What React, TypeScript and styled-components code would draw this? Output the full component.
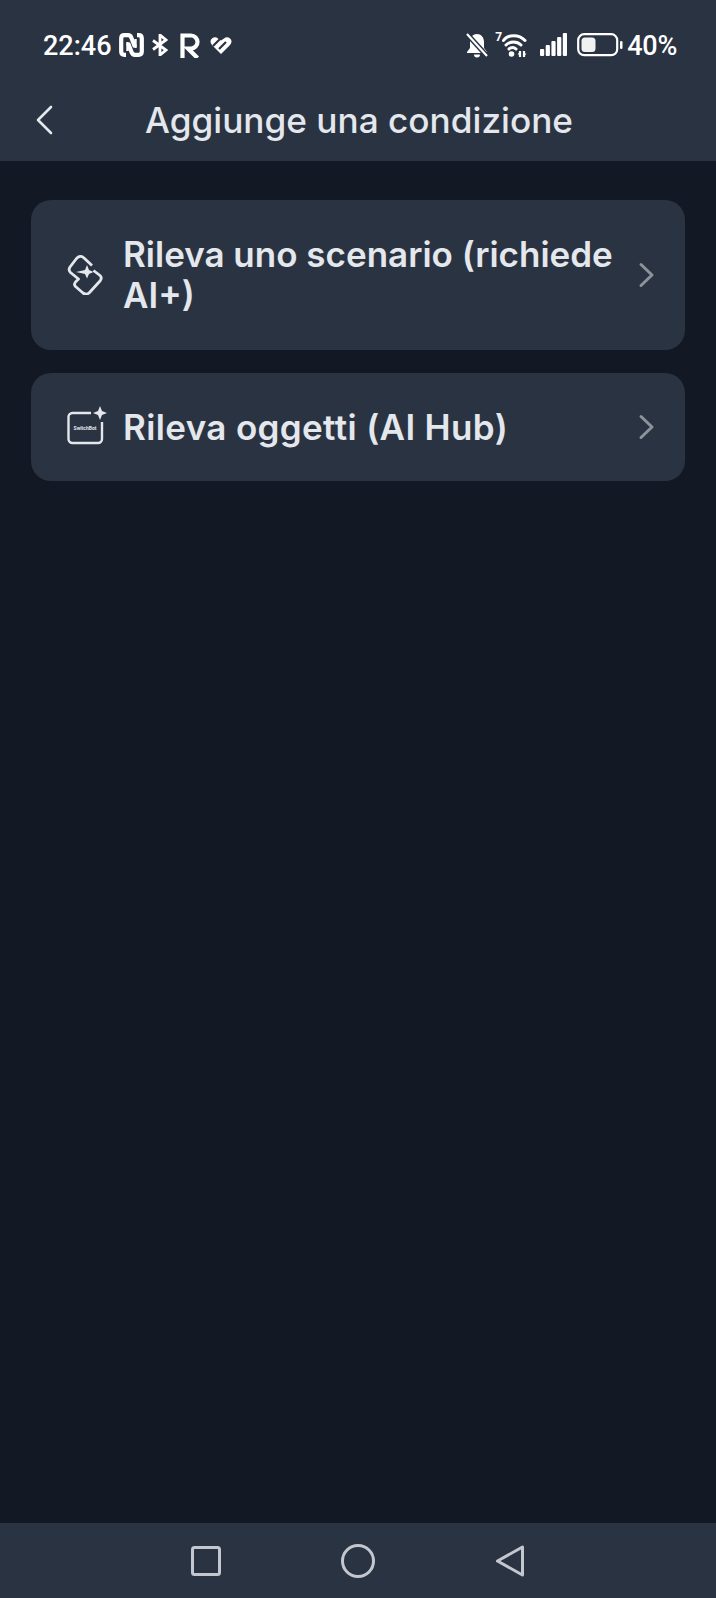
import { createGlobalStyle } from "styled-components";
import styled from "styled-components";

const GlobalStyle = createGlobalStyle`
  html, body {
    margin: 0;
    padding: 0;
    background: #121924;
  }
`;

const Page = styled.div`
  width: 716px;
  height: 1598px;
  display: flex;
  flex-direction: column;
  background: #121924;
  font-family: Inter, "Noto Sans", sans-serif;
`;

const TopArea = styled.header`
  height: 161px;
  box-sizing: border-box;
  background: #2a3342;
  display: flex;
  flex-direction: column;
`;

const StatusBar = styled.div`
  height: 90px;
  box-sizing: border-box;
  padding: 27px 39px 0 43px;
  display: flex;
  justify-content: space-between;
  align-items: flex-start;
  color: #ffffff;
`;

const StatusGroup = styled.div`
  display: flex;
  align-items: center;
  height: 36px;
`;

const StatusText = styled.span`
  font-family: Roboto, sans-serif;
  font-size: 27px;
  font-weight: 500;
  padding-top: 1px;
`;

const Clock = styled(StatusText)`
  width: 76px;
`;

const Percent = styled(StatusText)`
  margin-left: 4px;
  letter-spacing: -0.3px;
`;

const WifiGeneration = styled.span`
  align-self: flex-start;
  width: 7px;
  margin-top: 4px;
  font-family: Roboto, sans-serif;
  font-size: 12px;
  line-height: 12px;
  font-weight: 700;
`;

const BrandText = styled.text`
  font-family: Roboto, sans-serif;
  font-weight: 700;
`;

const TitleRow = styled.div`
  display: flex;
  align-items: center;
  height: 60px;
  padding-left: 35px;
`;

const Title = styled.h1`
  margin: 0 0 0 90px;
  font-size: 35.2px;
  font-weight: 500;
  color: #e4e7ec;
  white-space: nowrap;
`;

const Content = styled.main`
  flex: 1;
  padding: 39px 31px 0;
  display: flex;
  flex-direction: column;
  gap: 23px;
`;

const Card = styled.div<{ $height: number }>`
  height: ${(p) => p.$height}px;
  box-sizing: border-box;
  background: #2a3342;
  border-radius: 20px;
  display: flex;
  align-items: center;
  padding: 0 29px 0 36px;
`;

const CardIcon = styled.div`
  width: 38px;
  height: 42px;
  flex: none;
  display: flex;
  align-items: center;
  margin-right: 18px;
`;

const CardLabel = styled.div<{ $tracking?: number }>`
  flex: 1;
  font-size: 35px;
  line-height: 41px;
  font-weight: 600;
  letter-spacing: ${(p) => p.$tracking ?? 0}px;
  color: #e4e7ec;
`;

const NavBar = styled.nav`
  height: 75px;
  background: #2a3342;
  display: flex;
  align-items: center;
  justify-content: center;
  gap: 118px;
`;

const NavIcon = styled.svg`
  width: 34px;
  height: 34px;
  flex: none;
  fill: none;
  stroke: #c4c8ce;
  stroke-width: 3;
  stroke-linejoin: round;
`;

const Chevron = () => (
  <svg width="20" height="28" viewBox="0 0 20 28" fill="none" stroke="#8d929b" strokeWidth="3" strokeLinecap="round" strokeLinejoin="round">
    <path d="M5 3.500L16 14 5 24.500" />
  </svg>
);

export default function App() {
  return (
    <Page>
      <GlobalStyle />
      <TopArea>
        <StatusBar>
          <StatusGroup>
            <Clock>22:46</Clock>
            {/* NFC */}
            <svg width="25" height="24" viewBox="0 0 25 24" fill="none" stroke="#fff" style={{ marginRight: 7 }}>
              <path d="M7 21.800H5.500Q2.200 21.800 2.200 18.500V5.500Q2.200 2.200 5.500 2.200H9Q11.500 2.200 12.500 5L16 14" strokeWidth="4.200" />
              <path d="M18 2.200H19.500Q22.800 2.200 22.800 5.500V18.500Q22.800 21.800 19.500 21.800H16Q13.500 21.800 12.500 19L9 10" strokeWidth="4.200" />
              <path d="M8.500 9V18M16.500 6V15" strokeWidth="2.400" />
            </svg>
            {/* Bluetooth */}
            <svg width="18" height="22" viewBox="0 0 18 22" fill="none" stroke="#fff" strokeWidth="2.800" style={{ marginRight: 11 }}>
              <path d="M2 6.500L15 16 9 21V1L15 6 2 15.500" />
            </svg>
            <svg width="20" height="25" viewBox="0 0 20 25" fill="none" stroke="#fff" strokeWidth="4.200" style={{ marginRight: 10 }}>
              <path d="M2.500 25V2.500H11A6.500 6.500 0 0 1 11 15.500H8L17.500 25" />
            </svg>
            {/* Heart */}
            <svg width="22" height="18" viewBox="0 0 22 18">
              <path d="M11 18L2 9Q-1 5 2 2.500Q5 0 8 2.500L11 4.500L14 2.500Q17 0 20 2.500Q23 5 20 9Z" fill="#fff" />
              <path d="M3 10L11 2M9 13L16 6" stroke="#2a3342" strokeWidth="2.200" />
            </svg>
          </StatusGroup>
          <StatusGroup>
            {/* Muted bell */}
            <svg width="24" height="26" viewBox="0 0 24 26" style={{ marginRight: 6 }}>
              <path d="M12 2c-4 0-7 3-7 8v6l-3 4v1h20v-1l-3-4v-6c0-5-3-8-7-8zM9 22.500h6a3 3 0 0 1-6 0z" fill="#fff" />
              <path d="M2 2l20 22" stroke="#2a3342" strokeWidth="5" />
              <path d="M2 2l20 22" stroke="#fff" strokeWidth="2.200" />
            </svg>
            <WifiGeneration>7</WifiGeneration>
            {/* Wifi */}
            <svg width="26" height="26" viewBox="7 0 26 26" fill="none" stroke="#fff" strokeWidth="3" style={{ marginRight: 12 }}>
              <path d="M8.500 8.500C13 2 24 2 30 8.500M11 13C15 9 22 9 26 13M14 17C16 15 19 15 21 17" strokeLinecap="round" />
              <circle cx="16.500" cy="22" r="2.800" fill="#fff" stroke="none" />
              <path d="M25 19v6M29 19v6" strokeWidth="2.200" />
              <path d="M22.500 22.500l2.500-3v3zM31.500 21.500l-2.500 3v-3z" fill="#fff" stroke="none" />
            </svg>
            {/* Signal */}
            <svg width="27" height="24" viewBox="0 0 27 24" fill="#fff" style={{ marginRight: 10 }}>
              <rect x="0" y="16" width="4.200" height="7" rx="1" />
              <rect x="5.700" y="12" width="4.200" height="11" rx="1" />
              <rect x="11.400" y="8" width="4.200" height="15" rx="1" />
              <rect x="17.100" y="4" width="4.200" height="19" rx="1" />
              <rect x="22.800" y="0" width="4.200" height="23" rx="1" />
            </svg>
            {/* Battery */}
            <svg width="46" height="24" viewBox="0 0 46 24" fill="none">
              <rect x="1.200" y="1.200" width="39" height="21" rx="6" stroke="#fff" strokeWidth="2.200" />
              <rect x="4.500" y="4.500" width="14" height="14.500" rx="3.500" fill="#f1f1f1" />
              <rect x="43" y="8" width="2.500" height="8" rx="1.200" fill="#fff" />
            </svg>
            <Percent>40%</Percent>
          </StatusGroup>
        </StatusBar>
        <TitleRow>
          <svg width="20" height="30" viewBox="0 0 20 30" fill="none" stroke="#e4e7ec" strokeWidth="2.600" strokeLinecap="round" strokeLinejoin="round">
            <path d="M16 2L3 15l13 13" />
          </svg>
          <Title>Aggiunge una condizione</Title>
        </TitleRow>
      </TopArea>
      <Content>
        <Card $height={150}>
          <CardIcon>
            <svg width="36" height="40" viewBox="7 5 36 40" fill="none" stroke="#e4e7ec" strokeWidth="2.800" strokeLinejoin="round">
              <path d="M32 15.500L24 8Q20 4.500 16.500 8.500L10 17Q8 20 10.500 22.500L18.500 29L15.500 32Q13.500 34.500 15.500 36.500L23 43Q26.500 45.500 29.500 42.500L40 31Q42.500 28 40 25.500L33.500 20.500" />
              <path d="M16 22L25 20L27 15L29 20L33.500 22L29 24L27 28.500L25 24Z" fill="#e4e7ec" stroke="none" />
            </svg>
          </CardIcon>
          <CardLabel>Rileva uno scenario (richiede AI+)</CardLabel>
          <Chevron />
        </Card>
        <Card $height={108}>
          <CardIcon>
            <svg width="42" height="42" viewBox="0 0 42 42" fill="none" style={{ flex: "none" }}>
              <path d="M24 7H5.500A4 4 0 0 0 1.500 11V33A4 4 0 0 0 5.500 37H31A4 4 0 0 0 35 33V16" stroke="#e4e7ec" strokeWidth="2.400" />
              <path d="M33 0L35 5L40 7L35 9L33 14L31 9L26 7L31 5Z" fill="#e4e7ec" />
              <BrandText x="18" y="23.500" fontSize="5" textAnchor="middle" fill="#e4e7ec">SwitchBot</BrandText>
            </svg>
          </CardIcon>
          <CardLabel $tracking={0.36}>Rileva oggetti (AI Hub)</CardLabel>
          <Chevron />
        </Card>
      </Content>
      <NavBar>
        <NavIcon viewBox="0 0 34 34">
          <rect x="3.500" y="3.500" width="27" height="27" rx="2" />
        </NavIcon>
        <NavIcon viewBox="0 0 34 34">
          <circle cx="17" cy="17" r="15.500" />
        </NavIcon>
        <NavIcon viewBox="0 0 34 34">
          <path d="M4.500 17L29.500 3V31Z" />
        </NavIcon>
      </NavBar>
    </Page>
  );
}
